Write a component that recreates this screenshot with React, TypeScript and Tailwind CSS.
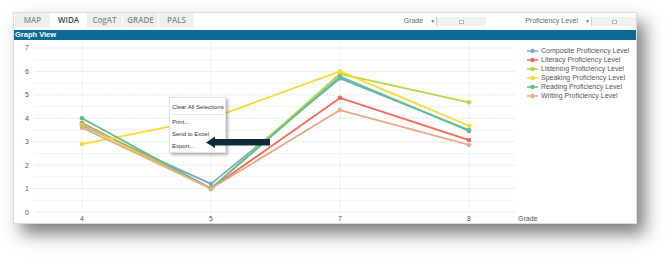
import React from "react";

const XS = [68, 197, 326, 455];
const yOf = (v: number) => 172 - 23.43 * v;

const SERIES = [
  { name: "Composite Proficiency Level", color: "#7fa6d0", data: [3.7, 1.2, 5.7, 3.5] },
  { name: "Literacy Proficiency Level", color: "#f7685a", data: [3.8, 1.0, 4.87, 3.07] },
  { name: "Listening Proficiency Level", color: "#b6d54a", data: [3.75, 1.0, 5.9, 4.68] },
  { name: "Speaking Proficiency Level", color: "#fbd92f", data: [2.9, 4.0, 6.0, 3.68] },
  { name: "Reading Proficiency Level", color: "#5cbf8c", data: [4.0, 1.0, 5.78, 3.46] },
  { name: "Writing Proficiency Level", color: "#eaaa87", data: [3.6, 1.0, 4.35, 2.86] },
];

const TABS = ["MAP", "WIDA", "CogAT", "GRADE", "PALS"];

function Chart() {
  const ints = [0, 1, 2, 3, 4, 5, 6, 7];
  const halves = [0.5, 1.5, 2.5, 3.5, 4.5, 5.5, 6.5];
  return (
    <svg width="512" height="183" viewBox="0 0 512 183" className="shrink-0 overflow-visible">
      {halves.map((h) => (
        <line key={"h" + h} x1="20" x2="501" y1={yOf(h)} y2={yOf(h)} stroke="#efefef" strokeWidth="0.8" />
      ))}
      {ints.map((i) => (
        <line key={"i" + i} x1="20" x2="501" y1={yOf(i)} y2={yOf(i)} stroke="#d6d6d6" strokeWidth="0.8" strokeDasharray="1.2 1.2" />
      ))}
      {XS.map((x) => (
        <line key={"v" + x} x1={x} x2={x} y1="2" y2={yOf(0)} stroke="#dcdcdc" strokeWidth="0.8" strokeDasharray="1.2 1.2" />
      ))}
      {ints.map((i) => (
        <text key={"l" + i} x="13" y={yOf(i) + 2.5} fontSize="7" fill="#555" textAnchor="middle" fontFamily="Liberation Sans, Arial, sans-serif">
          {i}
        </text>
      ))}
      {["4", "5", "7", "8"].map((t, k) => (
        <text key={"x" + t} x={XS[k]} y="180.5" fontSize="7" fill="#555" textAnchor="middle" fontFamily="Liberation Sans, Arial, sans-serif">
          {t}
        </text>
      ))}
      <text x="504" y="180.5" fontSize="7" fill="#555" fontFamily="Liberation Sans, Arial, sans-serif">
        Grade
      </text>
      {SERIES.map((s) => (
        <g key={s.name}>
          <polyline
            points={s.data.map((v, k) => `${XS[k]},${yOf(v)}`).join(" ")}
            fill="none"
            stroke={s.color}
            strokeWidth="1.8"
            strokeLinejoin="round"
          />
          {s.data.map((v, k) => (
            <circle key={k} cx={XS[k]} cy={yOf(v)} r="2.3" fill={s.color} />
          ))}
        </g>
      ))}
    </svg>
  );
}

function Legend() {
  return (
    <div className="flex flex-col pt-[6px] pl-[1px]">
      {SERIES.map((s) => (
        <div key={s.name} className="flex items-center h-[9px]">
          <svg width="11" height="6" viewBox="0 0 11 6" className="mr-[3px]">
            <line x1="0" x2="11" y1="3" y2="3" stroke={s.color} strokeWidth="1.5" />
            <circle cx="5.5" cy="3" r="2.2" fill={s.color} />
          </svg>
          <span className="text-[7px] leading-[9px] text-[#555] whitespace-nowrap font-['Liberation_Sans',Arial,sans-serif]">
            {s.name}
          </span>
        </div>
      ))}
    </div>
  );
}

function Selector({ label, boxW }: { label: string; boxW: number }) {
  return (
    <div className="flex items-center h-[17px]">
      <span className="text-[7px] text-[#666] font-['Liberation_Sans',Arial,sans-serif]">{label}</span>
      <span className="text-[5px] text-[#777] ml-[7px] mr-[1px] leading-none">▼</span>
      <div className="w-px h-[9px] bg-[#cfcfcf]" />
      <div
        className="h-[9px] bg-[#f1f1f1] flex items-center justify-center"
        style={{ width: boxW }}
      >
        <div className="w-[5px] h-[4px] border border-[#b5b5b5] bg-white" />
      </div>
    </div>
  );
}

export default function App() {
  return (
    <div className="w-[667px] h-[262px] bg-white pt-[12px] pl-[13px] overflow-hidden">
      <div className="w-[624px] h-[212px] bg-white border border-[#dcdcdc] shadow-[8px_10px_16px_rgba(0,0,0,0.5)] flex flex-col">
        <div className="h-[17px] flex items-start shrink-0">
          <div className="flex ml-[1px]">
            {TABS.map((t) => (
              <div
                key={t}
                className={
                  "h-[14px] w-[36px] flex items-center justify-center text-[8px] font-semibold font-['Open_Sans',Arial,sans-serif] border-r border-white " +
                  (t === "WIDA" ? "bg-white text-[#444]" : "bg-[#efefef] text-[#8a8a8a]")
                }
              >
                {t}
              </div>
            ))}
          </div>
          <div className="flex-1" />
          <div className="flex items-center">
            <Selector label="Grade" boxW={49} />
            <div className="w-[39px]" />
            <Selector label="Proficiency Level" boxW={44} />
          </div>
        </div>
        <div className="h-[10px] bg-[#0a6c95] shrink-0 flex items-center px-[1px]">
          <span className="text-[7.5px] font-bold text-white leading-none font-['Liberation_Sans',Arial,sans-serif]">
            Graph View
          </span>
        </div>
        <div className="relative flex flex-1">
          <Chart />
          <Legend />
          <div className="absolute left-[155px] top-[57px] w-[57px] h-[56px] bg-white border border-[#e2e2e2] shadow-[2px_2px_3px_rgba(0,0,0,0.3)] pt-[4px] font-['Liberation_Sans',Arial,sans-serif] text-[6px] text-[#333]">
            <div className="h-[10px] leading-[10px] px-[2px] whitespace-nowrap">Clear All Selections</div>
            <div className="mt-[2px] mb-[1px] mx-[2px] border-t border-[#e6e6e6]" />
            <div className="h-[12px] leading-[12px] px-[2px]">Print...</div>
            <div className="h-[12px] leading-[12px] px-[2px]">Send to Excel</div>
            <div className="h-[12px] leading-[12px] px-[2px]">Export...</div>
          </div>
          <svg className="absolute left-[192px] top-[96px]" width="64" height="13" viewBox="0 0 64 13">
            <polygon points="0,6.5 9,0.5 9,3 64,3 64,9.5 9,9.5 9,12 " fill="#0e2b3b" />
          </svg>
        </div>
      </div>
    </div>
  );
}
